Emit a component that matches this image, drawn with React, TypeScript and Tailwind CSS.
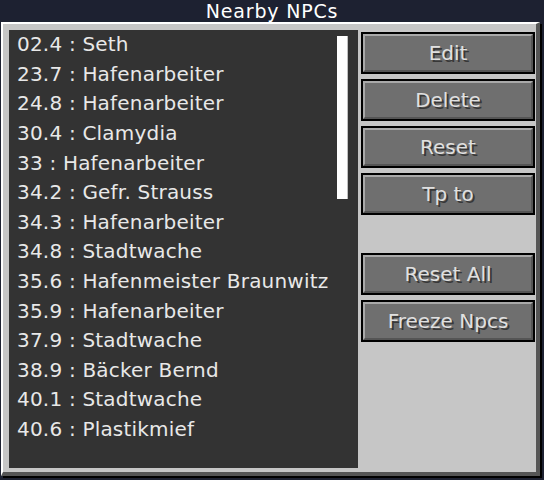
const npcs = [
  "02.4 : Seth",
  "23.7 : Hafenarbeiter",
  "24.8 : Hafenarbeiter",
  "30.4 : Clamydia",
  "33 : Hafenarbeiter",
  "34.2 : Gefr. Strauss",
  "34.3 : Hafenarbeiter",
  "34.8 : Stadtwache",
  "35.6 : Hafenmeister Braunwitz",
  "35.9 : Hafenarbeiter",
  "37.9 : Stadtwache",
  "38.9 : Bäcker Bernd",
  "40.1 : Stadtwache",
  "40.6 : Plastikmief",
];

function McButton({ label }: { label: string }) {
  return (
    <div className="h-[42px] w-[174px] border-2 border-black">
      <div className="flex h-full w-full items-center justify-center border-2 border-t-[#a9a9a9] border-l-[#a9a9a9] border-r-[#555555] border-b-[#555555] bg-[#6f6f6f] pb-[1px] text-[20px] text-[#e0e0e0] [text-shadow:2px_2px_0_#383838]">
        {label}
      </div>
    </div>
  );
}

export default function App() {
  return (
    <div className="relative h-[480px] w-[544px] overflow-hidden bg-[#1d2131] font-['DejaVu_Sans',sans-serif]">
      <div className="h-[22px] text-center text-[19px] leading-[22px] tracking-[0.8px] text-white">
        Nearby NPCs
      </div>
      <div className="ml-[1px] h-[454px] w-[539px] border-l-2 border-t-2 border-r-4 border-b-4 border-l-white border-t-white border-r-[#555555] border-b-[#555555] bg-[#c6c6c6] shadow-[2px_2px_0_#000]">
        <div className="flex gap-[3px] pl-[6px] pt-[6px]">
          <div className="relative h-[438px] w-[349px] bg-[#333333]">
            <div className="flex flex-col">
              {npcs.map((n) => (
                <div
                  key={n}
                  className="flex h-[29.6px] items-center whitespace-nowrap pb-[1px] pl-[8px] text-[20px] tracking-[0.2px] text-[#e8e8e8]"
                >
                  {n}
                </div>
              ))}
            </div>
            <div className="absolute left-[328px] top-[6px] h-[163px] w-[11px] border-r border-[#c0c0c0] bg-white" />
          </div>
          <div className="flex flex-col pt-[2px]">
            <div className="flex flex-col gap-[5px]">
              <McButton label="Edit" />
              <McButton label="Delete" />
              <McButton label="Reset" />
              <McButton label="Tp to" />
            </div>
            <div className="mt-[38px] flex flex-col gap-[5px]">
              <McButton label="Reset All" />
              <McButton label="Freeze Npcs" />
            </div>
          </div>
        </div>
      </div>
    </div>
  );
}
